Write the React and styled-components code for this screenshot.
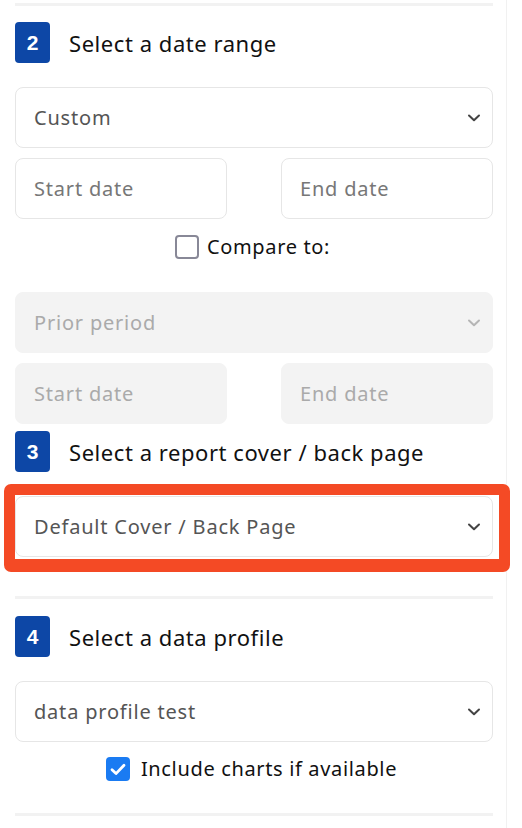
import React from 'react';
import styled, { createGlobalStyle } from 'styled-components';

const GlobalStyle = createGlobalStyle`
  html, body {
    margin: 0;
    padding: 0;
    background: #fff;
  }
  body {
    font-family: "Noto Sans", Lato, sans-serif;
    color: #111;
  }
`;

// 전체 패널
const Panel = styled.div`
  width: 507px;
  min-height: 828px;
  border-right: 1px solid #f1f1f1;
  box-sizing: border-box;
  padding: 3px 13px 0 15px;
`;

const Divider = styled.div`
  height: 3px;
  background: #f2f2f2;
  margin-top: ${({ $top }) => $top || 0}px;
`;

const StepHeader = styled.div`
  display: flex;
  align-items: center;
  gap: 19px;
  margin-top: ${({ $top }) => $top || 0}px;
`;

const Badge = styled.div`
  width: 35px;
  height: 41px;
  border-radius: 4px;
  background: #0d47a6;
  color: #fff;
  font-family: "Liberation Sans", Arial, sans-serif;
  font-weight: 700;
  font-size: 21px;
  display: flex;
  align-items: center;
  justify-content: center;
`;

const StepTitle = styled.h2`
  margin: 0;
  font-size: 22px;
  line-height: 28px;
  font-weight: 400;
  letter-spacing: 0.55px;
  color: #111;
`;

const Field = styled.div`
  position: relative;
  height: 61px;
  box-sizing: border-box;
  border-radius: 8px;
  border: 1px solid ${({ $disabled }) => ($disabled ? '#f3f3f3' : '#e6e6e6')};
  background: ${({ $disabled }) => ($disabled ? '#f3f3f3' : '#fff')};
  display: flex;
  align-items: center;
  justify-content: space-between;
  padding: 0 11px 0 18px;
  font-size: 20px;
  letter-spacing: 0.8px;
  color: ${({ $disabled, $placeholder }) => ($disabled ? '#aaaaaa' : $placeholder ? '#777' : '#555')};
  margin-top: ${({ $top }) => $top || 0}px;
`;

// 강조 표시용 빨간 테두리 (레이아웃에 영향 없음)
const Highlight = styled.div`
  position: relative;
  margin-top: ${({ $top }) => $top || 0}px;
  &::after {
    content: '';
    position: absolute;
    top: -12px;
    left: -11px;
    right: -17px;
    bottom: -15px;
    border: 11px solid #f44a25;
    border-bottom-width: 13px;
    border-radius: 7px;
    pointer-events: none;
  }
`;

const DateRow = styled.div`
  display: grid;
  grid-template-columns: 1fr 1fr;
  column-gap: 54px;
  margin-top: ${({ $top }) => $top || 0}px;
`;

const CheckRow = styled.label`
  display: flex;
  align-items: center;
  justify-content: center;
  gap: ${({ $gap }) => $gap || 8}px;
  font-size: 20px;
  letter-spacing: 0.65px;
  line-height: 24px;
  color: #111;
  margin-top: ${({ $top }) => $top || 0}px;
  margin-left: ${({ $shift }) => $shift || 0}px;
`;

const Box = styled.span`
  width: 24px;
  height: 24px;
  box-sizing: border-box;
  border-radius: 4px;
  border: ${({ $checked }) => ($checked ? 'none' : '2.5px solid #888897')};
  background: ${({ $checked }) => ($checked ? '#1a7bf2' : '#fff')};
  display: flex;
  align-items: center;
  justify-content: center;
`;

const Chevron = ({ color = '#444' }) => (
  <svg width="14" height="8" viewBox="0 0 14 8" fill="none">
    <path d="M2 1.5 L7 6.3 L12 1.5" stroke={color} strokeWidth="2" strokeLinecap="round" strokeLinejoin="round" />
  </svg>
);

const Check = () => (
  <svg width="16" height="13" viewBox="0 0 16 13" fill="none">
    <path d="M2 6.8 L6 10.6 L14 2.2" stroke="#fff" strokeWidth="2.8" strokeLinecap="round" strokeLinejoin="round" />
  </svg>
);

export default function App() {
  return (
    <>
      <GlobalStyle />
      <Panel>
        <Divider />

        <StepHeader $top={16}>
          <Badge>2</Badge>
          <StepTitle>Select a date range</StepTitle>
        </StepHeader>
        <Field $top={24}>
          Custom
          <Chevron />
        </Field>
        <DateRow $top={10}>
          <Field $placeholder>Start date</Field>
          <Field $placeholder>End date</Field>
        </DateRow>
        <CheckRow $top={16} $shift={-3}>
          <Box />
          Compare to:
        </CheckRow>
        <Field $disabled $top={33}>
          Prior period
          <Chevron color="#b5b5b5" />
        </Field>
        <DateRow $top={10}>
          <Field $disabled>Start date</Field>
          <Field $disabled>End date</Field>
        </DateRow>

        <StepHeader $top={7}>
          <Badge>3</Badge>
          <StepTitle>Select a report cover / back page</StepTitle>
        </StepHeader>
        <Highlight $top={24}>
          <Field>
            Default Cover / Back Page
            <Chevron />
          </Field>
        </Highlight>

        <Divider $top={39} />

        <StepHeader $top={17}>
          <Badge>4</Badge>
          <StepTitle>Select a data profile</StepTitle>
        </StepHeader>
        <Field $top={24}>
          data profile test
          <Chevron />
        </Field>
        <CheckRow $top={15} $shift={-5} $gap={11}>
          <Box $checked>
            <Check />
          </Box>
          Include charts if available
        </CheckRow>
        <Divider $top={32} />
      </Panel>
    </>
  );
}
